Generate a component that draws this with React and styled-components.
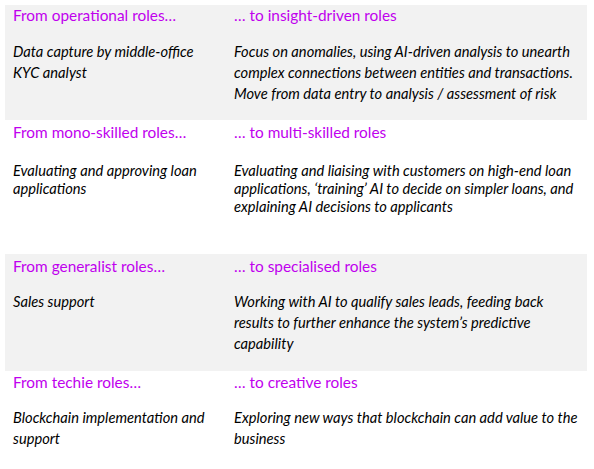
import React from 'react';
import styled, { createGlobalStyle } from 'styled-components';

const GlobalStyle = createGlobalStyle`
    body {
        margin: 0;
        background: #ffffff;
        font-family: Lato, "Open Sans", sans-serif;
    }
`
const Page = styled.div`
    padding: 5px 7px 0 5px;
`
const Section = styled.div`
    display: grid;
    grid-template-columns: 221px 1fr;
    height: ${({ h }) => h}px;
    padding: ${({ top }) => top}px 0 0 8px;
    box-sizing: border-box;
    background: ${({ shaded }) => (shaded ? '#f2f2f2' : '#ffffff')};
`
const Column = styled.div`
    display: flex;
    flex-direction: column;
    gap: ${({ gap }) => gap}px;
`
const Heading = styled.div`
    color: #c000ee;
    font-size: 15.4px;
    line-height: 20px;
    white-space: nowrap;
`
const Body = styled.div`
    font-style: italic;
    font-size: 14.7px;
    line-height: ${({ lh }) => lh}px;
    color: #000000;
`
const Line = styled.span`
    display: block;
    white-space: nowrap;
`

const sections = [
    {
        from: 'From operational roles…',
        to: '… to insight-driven roles',
        left: ['Data capture by middle-office', 'KYC analyst'],
        right: [
            'Focus on anomalies, using AI-driven analysis to unearth',
            'complex connections between entities and transactions.',
            'Move from data entry to analysis / assessment of risk',
        ],
        shaded: true, h: 115, top: 0, gap: 16, lh: 21,
    },
    {
        from: 'From mono-skilled roles…',
        to: '… to multi-skilled roles',
        left: ['Evaluating and approving loan', 'applications'],
        right: [
            'Evaluating and liaising with customers on high-end loan',
            'applications, ‘training’ AI to decide on simpler loans, and',
            'explaining AI decisions to applicants',
        ],
        shaded: false, h: 134, top: 2, gap: 19, lh: 18,
    },
    {
        from: 'From generalist roles…',
        to: '… to specialised roles',
        left: ['Sales support'],
        right: [
            'Working with AI to qualify sales leads, feeding back',
            'results to further enhance the system’s predictive',
            'capability',
        ],
        shaded: true, h: 117, top: 2, gap: 15, lh: 21,
    },
    {
        from: 'From techie roles…',
        to: '… to creative roles',
        left: ['Blockchain implementation and', 'support'],
        right: ['Exploring new ways that blockchain can add value to the', 'business'],
        shaded: false, h: 98, top: 1, gap: 15, lh: 21,
    },
]

const App = () => {
    return (
        <Page>
            <GlobalStyle />
            {sections.map((s) => (
                <Section key={s.from} shaded={s.shaded} h={s.h} top={s.top}>
                    <Column gap={s.gap}>
                        <Heading>{s.from}</Heading>
                        <Body lh={s.lh}>
                            {s.left.map((l) => <Line key={l}>{l}</Line>)}
                        </Body>
                    </Column>
                    <Column gap={s.gap}>
                        <Heading>{s.to}</Heading>
                        <Body lh={s.lh}>
                            {s.right.map((l) => <Line key={l}>{l}</Line>)}
                        </Body>
                    </Column>
                </Section>
            ))}
        </Page>
    )
}

export default App
